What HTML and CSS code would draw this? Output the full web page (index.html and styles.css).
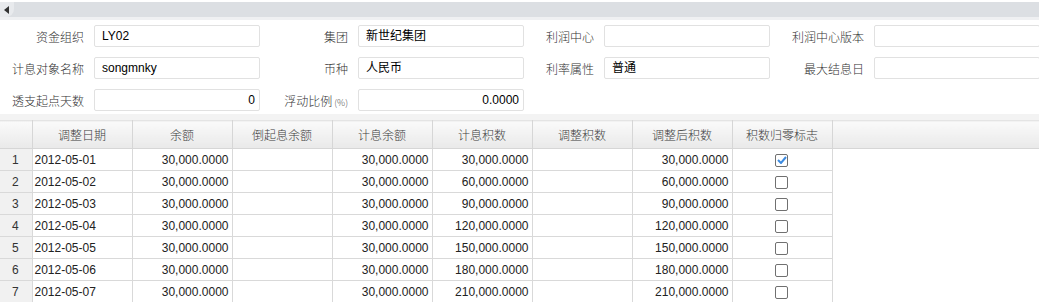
FILE: index.html
```
<!DOCTYPE html>
<html lang="zh-CN">
<head>
    <meta charset="UTF-8">
    <title>计息对象积数调整</title>
    <link rel="stylesheet" href="styles.css">
</head>
<body>
    <!-- Horizontal scroll bar at the top -->
    <div class="scrollbar">
        <span class="scroll-tab">
            <svg width="6" height="8" viewBox="0 0 6 8"><path d="M5 0 L5 8 L0 4 Z" fill="#333"/></svg>
        </span>
    </div>

    <!-- Header form -->
    <div class="form">
        <label>资金组织</label>
        <div class="field">LY02</div>
        <label>集团</label>
        <div class="field">新世纪集团</div>
        <label>利润中心</label>
        <div class="field"></div>
        <label>利润中心版本</label>
        <div class="field"></div>

        <label>计息对象名称</label>
        <div class="field">songmnky</div>
        <label>币种</label>
        <div class="field">人民币</div>
        <label>利率属性</label>
        <div class="field">普通</div>
        <label>最大结息日</label>
        <div class="field"></div>

        <label>透支起点天数</label>
        <div class="field num">0</div>
        <label>浮动比例<small>(%)</small></label>
        <div class="field num">0.0000</div>
    </div>

    <div class="divider"></div>

    <!-- Detail grid -->
    <table class="grid">
        <colgroup>
            <col class="c-no">
            <col class="c-data"><col class="c-data"><col class="c-data"><col class="c-data">
            <col class="c-data"><col class="c-data"><col class="c-data"><col class="c-data">
            <col>
        </colgroup>
        <thead>
            <tr>
                <th></th>
                <th>调整日期</th>
                <th>余额</th>
                <th>倒起息余额</th>
                <th>计息余额</th>
                <th>计息积数</th>
                <th>调整积数</th>
                <th>调整后积数</th>
                <th>积数归零标志</th>
                <th class="filler"></th>
            </tr>
        </thead>
        <tbody id="rows"></tbody>
    </table>

    <script>
        const rows = [
            { date: "2012-05-01", total: "30,000.0000", checked: true },
            { date: "2012-05-02", total: "60,000.0000" },
            { date: "2012-05-03", total: "90,000.0000" },
            { date: "2012-05-04", total: "120,000.0000" },
            { date: "2012-05-05", total: "150,000.0000" },
            { date: "2012-05-06", total: "180,000.0000" },
            { date: "2012-05-07", total: "210,000.0000" }
        ];
        const check = '<svg width="10" height="8" viewBox="0 0 10 8"><path d="M1 4 L4 7 L9 1" fill="none" stroke="#3d8be0" stroke-width="2"/></svg>';
        document.getElementById("rows").innerHTML = rows.map((r, i) => `
            <tr>
                <td class="no">${i + 1}</td>
                <td>${r.date}</td>
                <td class="num">30,000.0000</td>
                <td></td>
                <td class="num">30,000.0000</td>
                <td class="num">${r.total}</td>
                <td></td>
                <td class="num">${r.total}</td>
                <td class="center"><span class="chk">${r.checked ? check : ""}</span></td>
                <td class="filler"></td>
            </tr>`).join("");
    </script>
</body>
</html>
```
FILE: styles.css
```
/* General styling */
body {
    margin: 0;
    background: #fff;
    font-family: "Liberation Sans", Arial, "Noto Sans CJK SC", sans-serif;
    font-size: 12px;
    color: #222;
    overflow: hidden;
}
.scrollbar {
    margin-top: 2px;
    height: 15px;
    background: #dcdfe3;
    border-bottom: 3px solid #eff0f2;
}
.scroll-tab {
    display: inline-flex;
    align-items: center;
    justify-content: center;
    width: 14px;
    height: 15px;
    background: #e8eaed;
    border-radius: 0 0 8px 0;
}
/* Form */
.form {
    display: grid;
    grid-template-columns: 84px 166px 78px 166px 60px 166px 84px 166px;
    column-gap: 10px;
    row-gap: 10px;
    padding: 5px 0 3px;
    align-items: center;
}
.form label {
    text-align: right;
    color: #333;
    font-family: "Noto Sans CJK SC", sans-serif;
    font-weight: 300;
    font-size: 12px;
    white-space: nowrap;
}
.form label small {
    font-size: 9px;
    color: #555;
    margin-left: 2px;
}
.field {
    height: 20px;
    line-height: 20px;
    border: 1px solid #e1e1e1;
    border-radius: 2px;
    padding: 0 7px;
    color: #000;
    font-size: 12px;
    overflow: hidden;
}
.field.num {
    text-align: right;
    padding-right: 4px;
}
.divider {
    height: 6px;
    background: #f3f3f3;
}
/* Grid */
.grid {
    width: 100%;
    border-collapse: collapse;
    table-layout: fixed;
}
.grid .c-no {
    width: 32px;
}
.grid .c-data {
    width: 100px;
}
.grid th {
    height: 27px;
    padding: 0;
    font-family: "Noto Sans CJK SC", sans-serif;
    font-weight: 300;
    font-size: 12px;
    color: #3c3c3c;
    background: linear-gradient(#fafafa, #e9e9e9);
    border: 1px solid #d6d6d6;
    border-top-color: #e4e4e4;
}
.grid th:first-child,
.grid td:first-child {
    border-left: none;
}
.grid th.filler {
    border-right: none;
}
.grid td {
    height: 21px;
    padding: 0 3px 0 2px;
    border: 1px solid #d9d9d9;
    white-space: nowrap;
    overflow: hidden;
}
.grid td.no {
    background: #f1f1f1;
    text-align: center;
    color: #333;
}
.grid td.num {
    text-align: right;
}
.grid td.center {
    text-align: center;
}
.grid td.filler {
    border: none;
    border-left: 1px solid #d9d9d9;
}
.chk {
    display: inline-flex;
    align-items: center;
    justify-content: center;
    width: 11px;
    height: 11px;
    border: 1px solid #707070;
    border-radius: 2px;
    vertical-align: middle;
}
```
